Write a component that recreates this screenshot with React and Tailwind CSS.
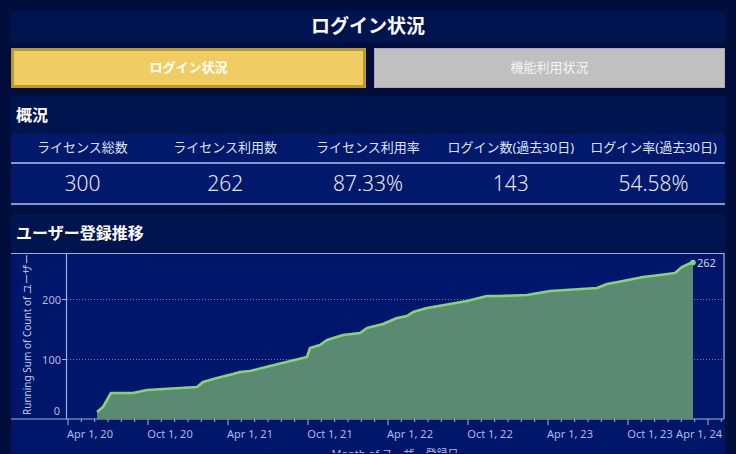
const FONT = "'Noto Sans', 'Noto Sans CJK JP', sans-serif";

const KPIS = [
  { label: 'ライセンス総数', value: '300' },
  { label: 'ライセンス利用数', value: '262' },
  { label: 'ライセンス利用率', value: '87.33%' },
  { label: 'ログイン数(過去30日)', value: '143' },
  { label: 'ログイン率(過去30日)', value: '54.58%' }
];

// page coordinates of the running sum curve
const POINTS = [
  [97, 413], [103, 408], [111, 394], [133, 394], [147, 391], [197, 388], [203, 383],
  [217, 379], [233, 375], [240, 373], [250, 372], [270, 367], [307, 358], [310, 349],
  [320, 346], [327, 341], [343, 336], [360, 334], [367, 329], [383, 325], [397, 319],
  [407, 317], [413, 313], [427, 309], [450, 305], [467, 302], [487, 297], [500, 297],
  [527, 296], [550, 292], [597, 289], [607, 285], [623, 282], [643, 278], [660, 276],
  [675, 274], [682, 268], [693, 263]
];

const X_LABELS = ['Apr 1, 20', 'Oct 1, 20', 'Apr 1, 21', 'Oct 1, 21', 'Apr 1, 22', 'Oct 1, 22', 'Apr 1, 23', 'Oct 1, 23'];

const Chart = () => {
  const line = POINTS.map((p) => p.join(',')).join(' ');
  const area = `${line} 693,420 97,420`;
  const minor = [];
  for (let i = 0; i <= 49; i++) minor.push(68 + (i * 80) / 6);

  return (
    <svg width="714" height="200" viewBox="11 254 714 200" className="block">
      {/* frame */}
      <line x1="11" y1="254.5" x2="724" y2="254.5" stroke="#9fb0dc" strokeWidth="1.2" />
      <line x1="724" y1="254" x2="724" y2="420" stroke="#9fb0dc" strokeWidth="1.2" />
      <line x1="11" y1="420" x2="724" y2="420" stroke="#9fb0dc" strokeWidth="1.2" />
      <line x1="66.5" y1="254" x2="66.5" y2="420" stroke="#9fb0dc" strokeWidth="1.2" />

      {/* grid */}
      <line x1="67" y1="300.5" x2="724" y2="300.5" stroke="#6f82b8" strokeWidth="1" strokeDasharray="1 2" />
      <line x1="67" y1="360.5" x2="724" y2="360.5" stroke="#6f82b8" strokeWidth="1" strokeDasharray="1 2" />

      {/* y ticks + labels */}
      <line x1="62" y1="300.5" x2="66" y2="300.5" stroke="#9fb0dc" />
      <line x1="62" y1="360.5" x2="66" y2="360.5" stroke="#9fb0dc" />
      <g fill="#aebbe0" fontSize="11" fontFamily={FONT} textAnchor="end">
        <text x="61" y="304.5">200</text>
        <text x="61" y="364.5">100</text>
        <text x="60" y="416">0</text>
      </g>
      <text
        transform="translate(31,416) rotate(-90)"
        fill="#c4cde8"
        fontSize="10"
        fontFamily={FONT}
      >
        Running Sum of Count of ユーザー
      </text>

      {/* area */}
      <polygon points={area} fill="#5b8a72" />
      <polyline points={line} fill="none" stroke="#86d66c" strokeWidth="2.6" strokeLinejoin="round" />
      <circle cx="693" cy="263.5" r="2.8" fill="#86d66c" />
      <text x="697" y="267.5" fill="#d0d8f0" fontSize="11" fontFamily={FONT}>262</text>

      {/* x ticks */}
      {minor.map((x, i) => (
        <line key={i} x1={x} y1="420" x2={x} y2={i % 6 === 0 ? 426 : 423} stroke="#9fb0dc" strokeWidth="1" />
      ))}
      <g fill="#aebbe0" fontSize="11" fontFamily={FONT} textAnchor="middle">
        {X_LABELS.map((l, i) => (
          <text key={l} x={90 + i * 80} y="439">{l}</text>
        ))}
        <text x="722" y="439" textAnchor="end">Apr 1, 24</text>
        <text x="395" y="459" fontSize="11">Month of ユーザー登録日</text>
      </g>
    </svg>
  );
};

export default function App() {
  return (
    <div className="w-[736px] h-[454px] overflow-hidden bg-[#010d3b] p-[11px] pb-0" style={{ fontFamily: FONT }}>
      <div className="h-[31px] bg-[#00144f] flex items-center justify-center text-white text-[19px] font-bold">
        ログイン状況
      </div>

      <div className="mt-[6px] h-[40px] flex gap-[8px]">
        <div className="flex-1 bg-[#f0cd62] border-[3px] border-[#b89a2f] flex items-center justify-center text-white text-[13px] font-bold">
          ログイン状況
        </div>
        <div className="flex-1 bg-[#c0c0c0] border border-[#a9abb8] flex items-center justify-center text-[#f4f4f4] text-[13px]">
          機能利用状況
        </div>
      </div>

      <div className="mt-[8px] bg-[#00144f]">
        <div className="h-[38px] flex items-center px-[5px] text-white text-[16px] font-bold">概況</div>
        <div className="grid grid-cols-5 h-[30px] bg-[#02186a] border-b-2 border-[#8797c8] items-center">
          {KPIS.map((k) => (
            <div key={k.label} className="text-center text-[13px] text-[#dfe4f4]">{k.label}</div>
          ))}
        </div>
        <div className="grid grid-cols-5 h-[41px] bg-[#02186a] border-b-2 border-[#8797c8] items-center">
          {KPIS.map((k) => (
            <div key={k.label} className="text-center text-[21px] font-light text-[#e2e7f6]">{k.value}</div>
          ))}
        </div>
        <div className="h-[2px]" />
      </div>

      <div className="mt-[6px] bg-[#00144f]">
        <div className="h-[40px] flex items-center px-[5px] text-white text-[16px] font-bold">ユーザー登録推移</div>
        <div className="bg-[#00166a]">
          <Chart />
        </div>
      </div>
    </div>
  );
}
